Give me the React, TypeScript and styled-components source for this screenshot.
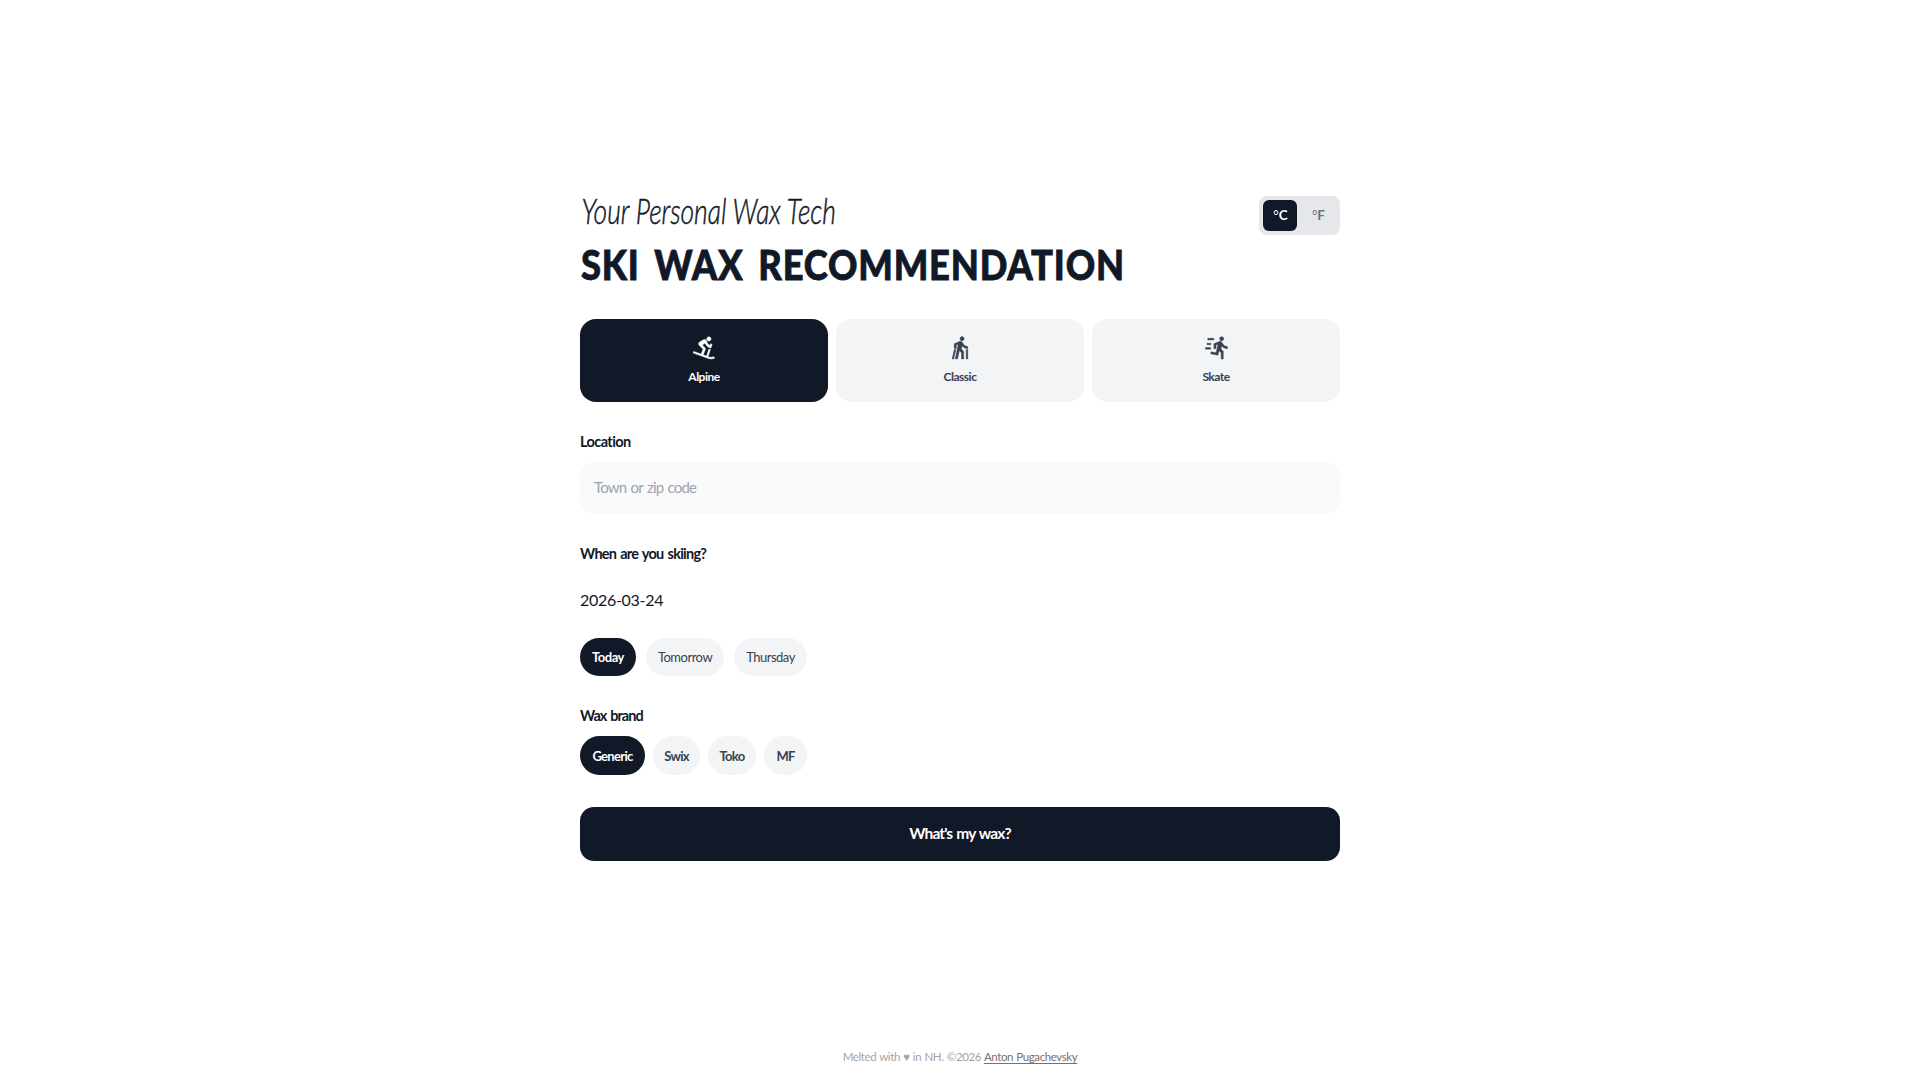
import React, { useState } from 'react';
import { MdDownhillSkiing, MdNordicWalking } from 'react-icons/md';
import styled, { createGlobalStyle } from 'styled-components';

const colors = {
  ink: '#111827',
  gray50: '#f9fafb',
  gray100: '#f3f4f6',
  gray200: '#e5e7eb',
  gray400: '#9ca3af',
  gray500: '#6b7280',
  gray700: '#374151',
  stone400: '#a8a29e',
  stone500: '#78716c',
  white: '#ffffff',
};

const GlobalStyle = createGlobalStyle`
  *, *::before, *::after {
    box-sizing: border-box;
  }

  body {
    margin: 0;
    background: ${colors.white};
    color: ${colors.ink};
    font-family: Lato, 'Open Sans', sans-serif;
  }

  button, input {
    font-family: inherit;
    border: 0;
    padding: 0;
    margin: 0;
  }
`;

const Page = styled.div`
  display: flex;
  flex-direction: column;
  align-items: center;
  height: 1080px;
  padding-top: 192px;
  overflow: hidden;
`;

const Form = styled.main`
  display: flex;
  flex-direction: column;
  width: 760px;
`;

const Header = styled.header`
  display: flex;
  justify-content: space-between;
  height: 127px;
`;

const Tagline = styled.div`
  height: 50px;
  padding-left: 2px;
  font-size: 36px;
  font-style: italic;
  font-weight: 300;
  line-height: 36px;
  white-space: nowrap;
  transform: scaleX(0.735);
  transform-origin: left;
  -webkit-text-stroke: 0.5px ${colors.ink};
`;

const Title = styled.h1`
  margin: 0;
  padding-left: 1px;
  font-size: 41px;
  font-weight: 900;
  line-height: 45px;
  text-transform: uppercase;
  white-space: nowrap;
  letter-spacing: 0.9px;
  word-spacing: 6px;
  transform: scaleX(0.887);
  transform-origin: left;
  -webkit-text-stroke: 0.8px ${colors.ink};
`;

const UnitToggle = styled.div`
  display: flex;
  flex: none;
  gap: 4px;
  width: 81px;
  height: 39px;
  margin-top: 4px;
  padding: 4px;
  border-radius: 8px;
  background: ${colors.gray200};
`;

const UnitButton = styled.button<{ $active: boolean }>`
  width: 34px;
  padding-left: 1px;
  border-radius: 6px;
  background: ${({ $active }) => ($active ? colors.ink : 'transparent')};
  color: ${({ $active }) => ($active ? colors.white : colors.gray500)};
  font-size: 13.5px;
  font-weight: 700;
  line-height: 31px;
`;

const Degree = styled.span`
  font-size: 13px;
  font-weight: 400;
`;

const StyleGrid = styled.div`
  display: grid;
  grid-template-columns: repeat(3, 1fr);
  gap: 8px;
  height: 83px;
`;

const StyleCard = styled.button<{ $active: boolean }>`
  display: flex;
  flex-direction: column;
  align-items: center;
  padding-top: 15px;
  border-radius: 16px;
  background: ${({ $active }) => ($active ? colors.ink : colors.gray100)};
  color: ${({ $active }) => ($active ? colors.white : colors.gray700)};
  font-size: 12px;
  font-weight: 700;
  line-height: 18px;
  letter-spacing: -0.5px;
`;

const CardIcon = styled.span<{ $size: number }>`
  display: flex;
  align-items: center;
  height: 26px;
  margin-bottom: 8px;

  svg {
    width: ${({ $size }) => $size}px;
    height: ${({ $size }) => $size}px;
    stroke: currentColor;
    stroke-width: 0.4;
  }

  path[fill='none'] {
    stroke: none;
  }
`;

const Label = styled.label<{ $tracking: number }>`
  padding-top: 1px;
  font-size: 14.5px;
  font-weight: 700;
  line-height: 23px;
  letter-spacing: ${({ $tracking }) => $tracking}px;
  word-spacing: 1.2px;
`;

const Section = styled.section`
  display: flex;
  flex-direction: column;
  margin-top: 27px;
`;

const LocationInput = styled.input`
  height: 52px;
  margin-top: 9px;
  padding: 0 14px 2px;
  border-radius: 14px;
  background: ${colors.gray50};
  font-size: 15px;
  letter-spacing: -0.8px;
  word-spacing: 1.2px;

  &::placeholder {
    color: ${colors.gray400};
    opacity: 1;
  }
`;

const DateValue = styled.div`
  margin-top: 23px;
  font-size: 16px;
  line-height: 23px;
  padding-bottom: 1px;
  letter-spacing: -0.3px;
`;

const PillRow = styled.div<{ $gap: number; $top: number }>`
  display: flex;
  gap: ${({ $gap }) => $gap}px;
  margin-top: ${({ $top }) => $top}px;
`;

const Pill = styled.button<{ $active: boolean; $width: number; $height: number; $bold?: boolean }>`
  width: ${({ $width }) => $width}px;
  height: ${({ $height }) => $height}px;
  border-radius: 20px;
  background: ${({ $active }) => ($active ? colors.ink : colors.gray100)};
  color: ${({ $active }) => ($active ? colors.white : colors.gray700)};
  font-size: 13px;
  font-weight: ${({ $active, $bold }) => ($active || $bold ? 700 : 400)};
  letter-spacing: ${({ $bold }) => ($bold ? -0.7 : -0.5)}px;
`;

const SubmitButton = styled.button`
  height: 54px;
  margin-top: 32px;
  padding-bottom: 2px;
  border-radius: 14px;
  background: ${colors.ink};
  color: ${colors.white};
  font-size: 15.5px;
  font-weight: 700;
  letter-spacing: -0.9px;
  word-spacing: 1.2px;
`;

const Footer = styled.footer`
  margin-top: 186px;
  color: ${colors.stone400};
  font-size: 11.5px;
  line-height: 20px;
  letter-spacing: -0.4px;
  word-spacing: 0.7px;
  white-space: nowrap;

  a {
    color: ${colors.stone500};
    text-decoration: underline;
    text-underline-offset: 2px;
  }
`;

const SprintIcon: React.FC = () => (
  <svg viewBox="0 0 24 24" fill="currentColor">
    <path
      transform="translate(3.5 .1)"
      d="M13.49 5.48c1.1 0 2-.9 2-2s-.9-2-2-2-2 .9-2 2 .9 2 2 2zm-3.6 13.9l1-4.4 2.1 2v6h2v-7.5l-2.1-2 .6-3c1.3 1.5 3.3 2.5 5.5 2.5v-2c-1.9 0-3.5-1-4.3-2.4l-1-1.6c-.4-.6-1-1-1.7-1-.3 0-.5.1-.8.1l-5.2 2.2v4.7h2v-3.4l1.8-.7-1.6 8.1-4.9-1-.4 2 7 1.4z"
    />
    <path d="M3.6 3.2h5.8v1.5H3.6zM2.9 7.8h3.8v1.5H2.9zM1.4 12.1h5v1.5h-5z" />
  </svg>
);

const styles = [
  { name: 'Alpine', icon: <MdDownhillSkiing />, size: 26 },
  { name: 'Classic', icon: <MdNordicWalking />, size: 25 },
  { name: 'Skate', icon: <SprintIcon />, size: 25 },
];

const days = [
  { name: 'Today', width: 56 },
  { name: 'Tomorrow', width: 78 },
  { name: 'Thursday', width: 73 },
];

const brands = [
  { name: 'Generic', width: 65 },
  { name: 'Swix', width: 47 },
  { name: 'Toko', width: 48 },
  { name: 'MF', width: 43 },
];

const App: React.FC = () => {
  const [unit, setUnit] = useState('C');
  const [style, setStyle] = useState('Alpine');
  const [day, setDay] = useState('Today');
  const [brand, setBrand] = useState('Generic');

  return (
    <>
      <GlobalStyle />
      <Page>
        <Form>
          <Header>
            <div>
              <Tagline>Your Personal Wax Tech</Tagline>
              <Title>Ski Wax Recommendation</Title>
            </div>
            <UnitToggle>
              {['C', 'F'].map((u) => (
                <UnitButton key={u} $active={unit === u} onClick={() => setUnit(u)}>
                  <Degree>°</Degree>
                  {u}
                </UnitButton>
              ))}
            </UnitToggle>
          </Header>

          <StyleGrid>
            {styles.map(({ name, icon, size }) => (
              <StyleCard key={name} $active={style === name} onClick={() => setStyle(name)}>
                <CardIcon $size={size}>{icon}</CardIcon>
                {name}
              </StyleCard>
            ))}
          </StyleGrid>

          <Section>
            <Label htmlFor="location" $tracking={-0.6}>Location</Label>
            <LocationInput id="location" placeholder="Town or zip code" />
          </Section>

          <Section>
            <Label $tracking={-0.75}>When are you skiing?</Label>
            <DateValue>2026-03-24</DateValue>
            <PillRow $gap={10} $top={26}>
              {days.map(({ name, width }) => (
                <Pill key={name} $active={day === name} $width={width} $height={38} onClick={() => setDay(name)}>
                  {name}
                </Pill>
              ))}
            </PillRow>
          </Section>

          <Section>
            <Label $tracking={-0.95}>Wax brand</Label>
            <PillRow $gap={8} $top={9}>
              {brands.map(({ name, width }) => (
                <Pill key={name} $active={brand === name} $width={width} $height={39} $bold onClick={() => setBrand(name)}>
                  {name}
                </Pill>
              ))}
            </PillRow>
          </Section>

          <SubmitButton>What's my wax?</SubmitButton>
        </Form>

        <Footer>
          Melted with ♥ in NH. ©2026 <a href="#">Anton Pugachevsky</a>
        </Footer>
      </Page>
    </>
  );
};

export default App;
